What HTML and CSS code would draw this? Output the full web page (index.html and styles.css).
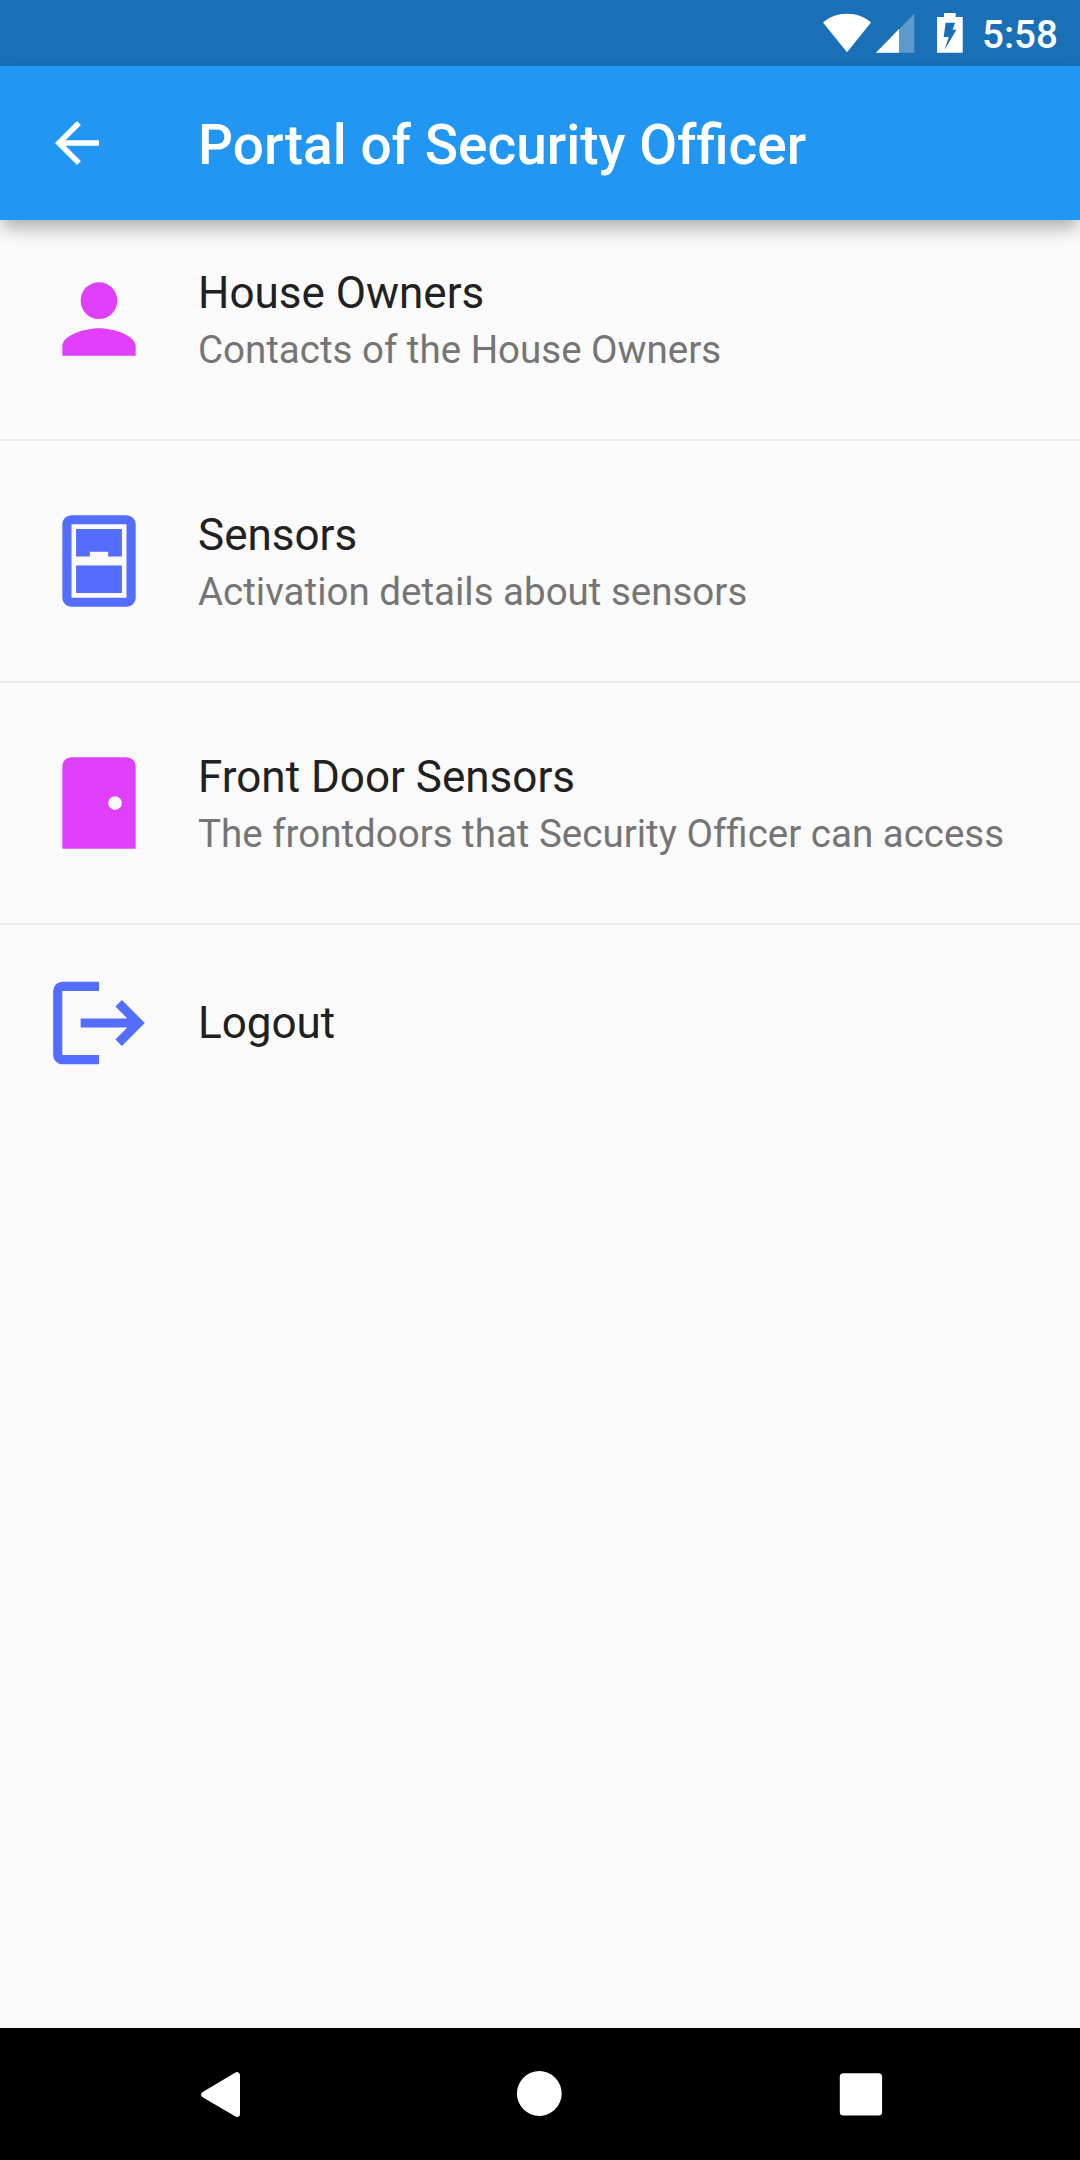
FILE: index.html
```html
<!DOCTYPE html>
<html lang="en">
<head>
<meta charset="utf-8">
<title>Portal of Security Officer</title>
<link rel="stylesheet" href="styles.css">
</head>
<body>
<div class="screen">
  <div class="status-bar">
    <svg class="status-icons" viewBox="0 0 145 66" aria-hidden="true">
      <path class="solid" d="M3 22.4C9.500 17 17.500 13.700 27 13.700S44.500 17 51 22.400L27 52.300z"/>
      <path class="faint" d="M94.300 13.700V52.700H56z"/>
      <path class="solid" d="M79 29.100V52.700H56z"/>
      <path class="solid" fill-rule="evenodd" d="M124 13h11.700v4H142.700v35.700H117V17h7zM125.600 22.800l-1.900 14.200h5L124.500 50 136.400 29.700h-3.700L135 22.800z"/>
    </svg>
    <span class="clock">5:58</span>
  </div>
  <header class="app-bar">
    <svg class="back" viewBox="0 0 24 24" aria-label="Back"><path d="M20 11H7.830l5.590-5.590L12 4l-8 8 8 8 1.410-1.410L7.830 13H20v-2z"/></svg>
    <h1 class="title">Portal of Security O<span class="plain">f</span>ficer</h1>
  </header>
  <main class="list">
    <div class="item item-first">
      <svg class="icon pink" viewBox="0 0 24 24"><path d="M12 12c2.210 0 4-1.790 4-4s-1.790-4-4-4-4 1.790-4 4 1.790 4 4 4zm0 2c-2.670 0-8 1.340-8 4v2h16v-2c0-2.660-5.330-4-8-4z"/></svg>
      <div class="text">
        <div class="name">House Owners</div>
        <div class="detail">Contacts of the House Owners</div>
      </div>
    </div>
    <div class="item">
      <svg class="icon blue" viewBox="0 0 24 24"><path fill-rule="evenodd" d="M6 2h12a2 2 0 0 1 2 2v16a2 2 0 0 1-2 2H6a2 2 0 0 1-2-2V4a2 2 0 0 1 2-2zM6 4v16h12V4z"/><path d="M7 5h10v6h-3v-1h-4v1H7zM7 13h10v6H7z"/></svg>
      <div class="text">
        <div class="name">Sensors</div>
        <div class="detail">Activation details about sensors</div>
      </div>
    </div>
    <div class="item">
      <svg class="icon pink" viewBox="0 0 24 24"><path fill-rule="evenodd" d="M18 2H6a2 2 0 0 0-2 2v18h16V4a2 2 0 0 0-2-2zM15.500 13.500a1.500 1.500 0 1 1 0-3 1.500 1.500 0 0 1 0 3z"/></svg>
      <div class="text">
        <div class="name">Front Door Sensors</div>
        <div class="detail">The frontdoors that Security O<span class="plain">f</span>ficer can access</div>
      </div>
    </div>
    <div class="item item-last">
      <svg class="icon blue" viewBox="0 0 24 24"><path d="M17 7l-1.410 1.410L18.170 11H8v2h10.170l-2.580 2.580L17 17l5-5zM4 5h8V3H4a2 2 0 0 0-2 2v14a2 2 0 0 0 2 2h8v-2H4z"/></svg>
      <div class="name">Logout</div>
    </div>
  </main>
  <nav class="nav-bar">
    <svg class="nav-icon" viewBox="0 0 48 48"><path class="rounded" d="M41 5.200v38.800L8.200 24.600z"/></svg>
    <svg class="nav-icon" viewBox="0 0 48 48"><circle cx="23.300" cy="23.500" r="22.400"/></svg>
    <svg class="nav-icon" viewBox="0 0 48 48"><rect x="2.800" y="3.200" width="42.300" height="42.300" rx="3.500"/></svg>
  </nav>
</div>
</body>
</html>
```
FILE: styles.css
```css
* { box-sizing: border-box; }

body {
  margin: 0;
  background: #fafafa;
  font-family: Roboto, "Liberation Sans", sans-serif;
}

svg { display: block; flex: none; }

.screen {
  display: flex;
  flex-direction: column;
  width: 1080px;
  height: 2160px;
  overflow: hidden;
}

.status-bar {
  display: flex;
  align-items: center;
  justify-content: flex-end;
  height: 66px;
  padding-right: 22px;
  background: #1970b6;
}

.status-icons { width: 145px; height: 66px; margin-right: 17px; }
.solid { fill: #fff; }
.faint { fill: #fff; opacity: .3; }

.clock {
  width: 76px;
  padding-top: 4px;
  color: #fff;
  font-size: 38.5px;
  font-weight: 500;
  line-height: 66px;
  white-space: nowrap;
}

.app-bar {
  display: flex;
  align-items: center;
  height: 154px;
  padding-left: 44px;
  background: #2196f3;
  box-shadow: 0 9px 18px -2px rgba(0, 0, 0, .33);
}

.back { width: 66px; height: 66px; fill: #fff; }

.title {
  margin: 3px 0 0 88px;
  color: #fff;
  font-size: 55px;
  font-weight: 500;
  line-height: 64px;
}

/* Keeps the "fi" ligature but not the three-letter "ffi" one. */
.plain { font-variant-ligatures: none; }

.list { flex: 1; }

.item {
  display: flex;
  height: 242px;
  padding: 65px 44px 0;
  border-bottom: 2px solid #ebebeb;
}

.item-first { height: 221px; padding-top: 44px; }
.item-last { height: 200px; padding-top: 43px; border-bottom: 0; }

.icon { width: 110px; height: 110px; margin-right: 44px; }
.pink { fill: #e040fb; }
.blue { fill: #536dfe; }

.text { padding-top: 3px; }

.name {
  color: #212121;
  font-size: 44px;
  line-height: 52px;
  white-space: nowrap;
}

.item-last .name { padding-top: 29px; }

.detail {
  margin-top: 8px;
  color: #757575;
  font-size: 38.5px;
  line-height: 46px;
  white-space: nowrap;
}

.nav-bar {
  display: flex;
  align-items: center;
  justify-content: space-between;
  height: 132px;
  padding: 0 195.5px 0 196px;
  background: #000;
}

.nav-icon { width: 48px; height: 48px; fill: #fff; }
.rounded { stroke: #fff; stroke-width: 6px; stroke-linejoin: round; }
```
